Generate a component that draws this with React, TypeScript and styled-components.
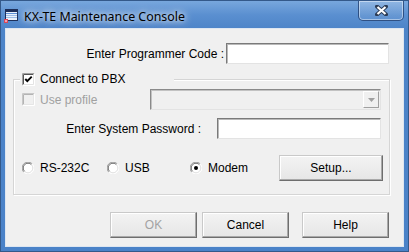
import React from "react";
import styled, { createGlobalStyle } from "styled-components";

const Global = createGlobalStyle`
  html, body { margin: 0; padding: 0; background: #ffffff; }
  * { box-sizing: border-box; }
`;

const Window = styled.div`
  width: 409px;
  height: 252px;
  display: flex;
  flex-direction: column;
  background: linear-gradient(180deg, #78a7dd 0px, #5a8fd0 14px, #4d84c8 28px, #4a82c8 100%);
  border: 1px solid #34598a;
  font-family: "Liberation Sans", Arial, sans-serif;
  font-size: 12px;
  color: #000;
`;

const TitleBar = styled.div`
  height: 27px;
  display: flex;
  align-items: flex-start;
  flex-shrink: 0;
`;

const AppIcon = styled.svg`
  margin: 7px 0 0 3px;
  flex-shrink: 0;
`;

const TitleText = styled.div`
  margin: 9px 0 0 5px;
  font-family: "Noto Sans", "Open Sans", sans-serif;
  font-size: 12.4px;
  line-height: 13px;
  color: #000;
  text-shadow: 0 0 8px rgba(255, 255, 255, 0.9), 0 0 5px rgba(255, 255, 255, 0.7),
    0 0 12px rgba(255, 255, 255, 0.5);
  flex: 1;
`;

const CloseButton = styled.div`
  width: 46px;
  height: 20px;
  margin-right: 4px;
  border: 1px solid rgba(30, 60, 110, 0.8);
  border-top: none;
  border-radius: 0 0 5px 5px;
  box-shadow: inset 0 0 0 1px rgba(255, 255, 255, 0.45);
  background: linear-gradient(180deg, rgba(255, 255, 255, 0.18), rgba(255, 255, 255, 0.05));
  display: flex;
  align-items: center;
  justify-content: center;
`;

const FrameBody = styled.div`
  flex: 1;
  display: flex;
  padding: 0 5px 4px 4px;
`;

const Client = styled.div`
  flex: 1;
  background: #f0f0f0;
  border: 1px solid #dde6f1;
  display: flex;
  flex-direction: column;
`;

const CodeRow = styled.div`
  display: flex;
  align-items: center;
  justify-content: flex-end;
  margin: 14px 14px 0 0;
`;

const Label = styled.span<{ $gap?: number; $disabled?: boolean }>`
  margin-right: ${(p) => p.$gap ?? 2}px;
  color: ${(p) => (p.$disabled ? "#a0a0a0" : "#000")};
  white-space: nowrap;
`;

const TextInput = styled.div<{ $w: number }>`
  width: ${(p) => p.$w}px;
  height: 21px;
  background: #fff;
  border: 1px solid;
  border-color: #7a7a7a #e3e3e3 #e3e3e3 #7a7a7a;
  box-shadow: inset 1px 1px 0 #b9b9b9;
`;

const Group = styled.div`
  margin: 15px 13px 0 7px;
  border: 1px solid #d5d5d5;
  box-shadow: inset 1px 1px 0 #fff, 1px 1px 0 #fff;
  display: flex;
  flex-direction: column;
  padding: 0 0 13px 0;
`;

const Legend = styled.div`
  display: flex;
  align-items: center;
  width: 154px;
  height: 14px;
  margin: -8px 0 0 6px;
  padding-left: 2px;
  background: #f0f0f0;
`;

const CheckLabel = styled.span<{ $disabled?: boolean }>`
  margin-left: 5px;
  color: ${(p) => (p.$disabled ? "#a0a0a0" : "#000")};
`;

const ProfileRow = styled.div`
  display: flex;
  align-items: center;
  margin: 3px 8px 0 8px;
  height: 21px;
`;

const ProfileLabel = styled.div`
  width: 128px;
  display: flex;
  align-items: center;
`;

const Select = styled.div`
  width: 231px;
  height: 21px;
  background: #f0f0f0;
  border: 1px solid;
  border-color: #8a8a8a #e3e3e3 #e3e3e3 #8a8a8a;
  box-shadow: inset 1px 1px 0 #c2c2c2;
  display: flex;
  justify-content: flex-end;
  padding: 1px;
`;

const SelectArrow = styled.div`
  width: 16px;
  height: 100%;
  background: #f0f0f0;
  border: 1px solid;
  border-color: #fff #a0a0a0 #a0a0a0 #fff;
  display: flex;
  align-items: center;
  justify-content: center;
`;

const PasswordRow = styled.div`
  display: flex;
  align-items: center;
  justify-content: flex-end;
  margin: 8px 8px 0 0;
`;

const RadioRow = styled.div`
  display: flex;
  align-items: center;
  margin: 16px 6px 0 8px;
`;

const RadioItem = styled.div<{ $w: number }>`
  width: ${(p) => p.$w}px;
  display: flex;
  align-items: center;
`;

const RadioText = styled.span`
  margin-left: 6px;
`;

const Button = styled.div<{ $w: number; $disabled?: boolean; $gap?: number }>`
  width: ${(p) => p.$w}px;
  height: 26px;
  margin-left: ${(p) => p.$gap ?? 0}px;
  background: linear-gradient(180deg, #f3f3f3, #e6e6e6);
  border: 1px solid;
  border-color: #c9c9c9 #6e6e6e #6e6e6e #c9c9c9;
  box-shadow: inset -1px -1px 0 #a9a9a9, inset 1px 1px 0 #ffffff;
  display: flex;
  align-items: center;
  justify-content: center;
  color: ${(p) => (p.$disabled ? "#a3a3a3" : "#000")};
`;

const Spacer = styled.div`
  flex: 1;
`;

const ButtonRow = styled.div`
  display: flex;
  margin: 17px 14px 0 0;
`;

const CheckBox: React.FC<{ checked?: boolean; disabled?: boolean }> = ({ checked, disabled }) => (
  <svg width="13" height="13" viewBox="0 0 13 13" style={{ flexShrink: 0 }}>
    <rect x="0" y="0" width="13" height="13" fill={disabled ? "#f0f0f0" : "#fff"} />
    <path d="M0.5 12.5 V0.5 H12.5" fill="none" stroke={disabled ? "#c8c8c8" : "#a0a0a0"} />
    <path d="M1.5 11.5 V1.5 H11.5" fill="none" stroke={disabled ? "#b4b4b4" : "#555"} />
    <path d="M0.5 12.5 H12.5 V0.5" fill="none" stroke="#fff" />
    <path d="M1.5 11.5 H11.5 V1.5" fill="none" stroke={disabled ? "#e6e6e6" : "#e3e3e3"} />
    {checked && (
      <polyline points="3.3,6 5.3,8.2 9.7,3.6" fill="none" stroke="#000" strokeWidth="1.9" />
    )}
  </svg>
);

const Radio: React.FC<{ checked?: boolean }> = ({ checked }) => (
  <svg width="12" height="12" viewBox="0 0 12 12" style={{ flexShrink: 0 }}>
    <circle cx="6" cy="6" r="5.5" fill="#fff" />
    <path d="M1.8 10.2 A5.5 5.5 0 0 1 10.2 1.8" fill="none" stroke="#9a9a9a" strokeWidth="1" />
    <path d="M2.6 9.4 A4.5 4.5 0 0 1 9.4 2.6" fill="none" stroke="#6a6a6a" strokeWidth="1" />
    <path d="M10.2 1.8 A5.5 5.5 0 0 1 1.8 10.2" fill="none" stroke="#ffffff" strokeWidth="1" />
    <path d="M9.4 2.6 A4.5 4.5 0 0 1 2.6 9.4" fill="none" stroke="#e0e0e0" strokeWidth="1" />
    {checked && <circle cx="6" cy="6" r="2" fill="#000" />}
  </svg>
);

export default function App() {
  return (
    <>
      <Global />
      <Window>
        <TitleBar>
          <AppIcon width="15" height="15" viewBox="0 0 15 15">
            <rect x="1" y="1" width="13" height="12" fill="#1d2f5a" />
            <rect x="2" y="4" width="11" height="8" fill="#e9f1fb" />
            <rect x="2" y="5" width="11" height="1" fill="#5b8fd6" />
            <rect x="2" y="7" width="11" height="1" fill="#9dbde6" />
            <rect x="2" y="9" width="11" height="1" fill="#9dbde6" />
            <rect x="0" y="11" width="4" height="4" fill="#d84a5a" />
            <rect x="1" y="12" width="2" height="2" fill="#f4a0b0" />
          </AppIcon>
          <TitleText>KX-TE Maintenance Console</TitleText>
          <CloseButton>
            <svg width="13" height="11" viewBox="0 0 13 11">
              <path d="M2 1.5 L11 9.5 M11 1.5 L2 9.5" stroke="#2b3b55" strokeWidth="4" strokeLinecap="round" />
              <path d="M2.5 2 L10.5 9 M10.5 2 L2.5 9" stroke="#ffffff" strokeWidth="2.2" />
            </svg>
          </CloseButton>
        </TitleBar>
        <FrameBody>
          <Client>
            <CodeRow>
              <Label>Enter Programmer Code :</Label>
              <TextInput $w={163} />
            </CodeRow>
            <Group>
              <Legend>
                <CheckBox checked />
                <CheckLabel>Connect to PBX</CheckLabel>
              </Legend>
              <ProfileRow>
                <ProfileLabel>
                  <CheckBox disabled />
                  <CheckLabel $disabled>Use profile</CheckLabel>
                </ProfileLabel>
                <Select>
                  <SelectArrow>
                    <svg width="7" height="4" viewBox="0 0 7 4">
                      <path d="M0 0 H7 L3.5 4 Z" fill="#a0a0a0" />
                    </svg>
                  </SelectArrow>
                </Select>
              </ProfileRow>
              <PasswordRow>
                <Label $gap={16}>Enter System Password :</Label>
                <TextInput $w={164} />
              </PasswordRow>
              <RadioRow>
                <RadioItem $w={85}>
                  <Radio />
                  <RadioText>RS-232C</RadioText>
                </RadioItem>
                <RadioItem $w={83}>
                  <Radio />
                  <RadioText>USB</RadioText>
                </RadioItem>
                <RadioItem $w={89}>
                  <Radio checked />
                  <RadioText>Modem</RadioText>
                </RadioItem>
                <Button $w={104}>Setup...</Button>
              </RadioRow>
            </Group>
            <ButtonRow>
              <Spacer />
              <Button $w={87} $disabled>OK</Button>
              <Button $w={87} $gap={5}>Cancel</Button>
              <Button $w={87} $gap={13}>Help</Button>
            </ButtonRow>
          </Client>
        </FrameBody>
      </Window>
    </>
  );
}
